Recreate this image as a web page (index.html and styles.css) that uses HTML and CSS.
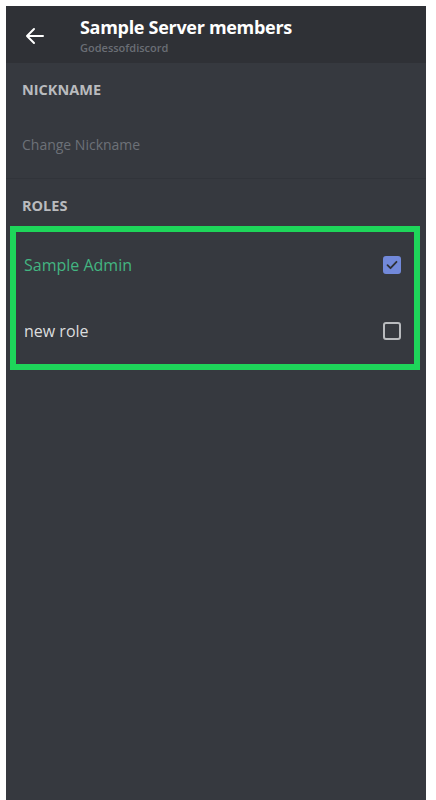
FILE: index.html
```html
<!DOCTYPE html>
<html lang="en">
<head>
<meta charset="utf-8">
<title>Sample Server members</title>
<link rel="stylesheet" href="styles.css">
</head>
<body>
<div class="app">
  <header class="topbar">
    <span class="back">
      <svg width="20" height="18" viewBox="0 0 20 18" fill="none" stroke="#ffffff" stroke-width="2" stroke-linecap="round" stroke-linejoin="round"><path d="M18 9H2M9 2L2 9l7 7"/></svg>
    </span>
    <div class="titles">
      <div class="title">Sample Server members</div>
      <div class="subtitle">Godessofdiscord</div>
    </div>
  </header>
  <section class="nick">
    <div class="label">NICKNAME</div>
    <div class="placeholder">Change Nickname</div>
  </section>
  <section class="roles">
    <div class="label">ROLES</div>
    <div class="rolebox">
      <div class="role">
        <span class="role-name admin">Sample Admin</span>
        <span class="check on">
          <svg width="12" height="10" viewBox="0 0 12 10" fill="none" stroke="#2f3136" stroke-width="1.8" stroke-linecap="round" stroke-linejoin="round"><path d="M1.5 5.2l3 3L10.5 1.8"/></svg>
        </span>
      </div>
      <div class="role">
        <span class="role-name">new role</span>
        <span class="check"></span>
      </div>
    </div>
  </section>
</div>
</body>
</html>
```
FILE: styles.css
```css
html, body {
  margin: 0;
  padding: 0;
  background: #ffffff;
}
body {
  font-family: "Open Sans", "Noto Sans", sans-serif;
}
.app {
  margin: 6px 0 0 6px;
  width: 420px;
  min-height: 794px;
  background: #36393f;
}
.topbar {
  height: 57px;
  background: #2f3136;
  display: flex;
  align-items: center;
}
.back {
  width: 20px;
  height: 18px;
  margin-left: 19px;
  margin-right: 35px;
  margin-top: 2px;
  display: flex;
}
.titles {
  display: flex;
  flex-direction: column;
  padding-top: 3px;
}
.title {
  color: #ffffff;
  font-weight: 700;
  font-size: 18px;
  line-height: 22px;
  letter-spacing: -0.3px;
  margin-top: -2px;
}
.subtitle {
  color: #6a6e75;
  font-size: 11px;
  line-height: 14px;
  margin-top: 3px;
  font-weight: 600;
}
.nick {
  padding: 19px 16px 0;
  border-bottom: 1px solid #31343a;
  height: 96px;
}
.label {
  color: #b9bbbe;
  font-size: 14.5px;
  font-weight: 700;
  line-height: 16px;
}
.placeholder {
  margin-top: 37px;
  color: #6d7178;
  font-size: 14px;
  line-height: 20px;
}
.roles {
  padding-top: 19px;
}
.roles .label {
  padding-left: 16px;
}
.rolebox {
  margin: 12px 6px 0 4px;
  border: 6px solid #1ed65a;
  padding: 0 13px 0 8px;
}
.role {
  height: 66px;
  display: flex;
  align-items: center;
  justify-content: space-between;
}
.role-name {
  color: #dcddde;
  font-size: 16px;
}
.role-name.admin {
  color: #43b581;
}
.check {
  box-sizing: border-box;
  width: 18px;
  height: 18px;
  border: 2px solid #b9bbbe;
  border-radius: 3px;
  display: flex;
  align-items: center;
  justify-content: center;
}
.check.on {
  background: #7289da;
  border-color: #7289da;
}
```
